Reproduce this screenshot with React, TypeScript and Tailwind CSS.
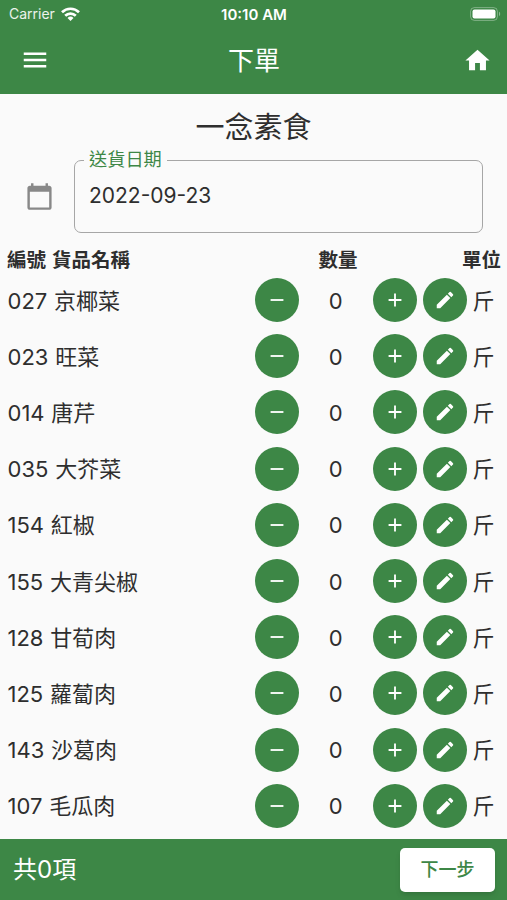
import { MdAdd, MdCalendarToday, MdEdit, MdHome, MdMenu, MdRemove } from "react-icons/md";

interface IProduct {
  code: string;
  name: string;
  unit: string;
}

const products: IProduct[] = [
  { code: "027", name: "京椰菜", unit: "斤" },
  { code: "023", name: "旺菜", unit: "斤" },
  { code: "014", name: "唐芹", unit: "斤" },
  { code: "035", name: "大芥菜", unit: "斤" },
  { code: "154", name: "紅椒", unit: "斤" },
  { code: "155", name: "大青尖椒", unit: "斤" },
  { code: "128", name: "甘荀肉", unit: "斤" },
  { code: "125", name: "蘿蔔肉", unit: "斤" },
  { code: "143", name: "沙葛肉", unit: "斤" },
  { code: "107", name: "毛瓜肉", unit: "斤" },
];

const StatusBar = () => (
  <div className="h-7 grid grid-cols-3 items-center pl-[9px] pr-[6px] text-[14px] leading-none">
    <span className="flex items-center gap-[6px] text-white/90">
      Carrier
      <svg width="19" height="14" viewBox="0 0 19 14" fill="none" stroke="white" strokeWidth="2.7">
        <path d="M1 5.2a12.2 12.2 0 0 1 17 0" />
        <path d="M4.2 8.7a7.6 7.6 0 0 1 10.6 0" />
        <path d="M9.5 14L6.5 11a4.3 4.3 0 0 1 6 0z" fill="white" stroke="none" />
      </svg>
    </span>
    <span className="pr-[2px] text-center text-[15px] font-semibold">10:10 AM</span>
    <svg className="justify-self-end" width="31" height="14" viewBox="0 0 31 14">
      <rect x="0.6" y="0.6" width="26.8" height="12.8" rx="3.8" fill="none" stroke="white" strokeOpacity="0.35" />
      <rect x="2.5" y="2.5" width="23" height="9" rx="2" fill="white" />
      <path d="M29 4.8v4.4c1.6-.6 1.6-3.8 0-4.4z" fill="white" fillOpacity="0.4" />
    </svg>
  </div>
);

const ProductRow = ({ product }: { product: IProduct }) => (
  <li className="h-[56.2px] flex items-center pl-[7.5px]">
    <p className="w-[247.5px] pt-[2px] whitespace-pre [word-spacing:0.6px]">
      {product.code} {product.name}
    </p>
    <button className="size-11 rounded-full bg-[#3d8746] text-white flex items-center justify-center">
      <MdRemove className="size-[22px]" />
    </button>
    <span className="w-[73.5px] pt-[2px] text-center">0</span>
    <button className="size-11 rounded-full bg-[#3d8746] text-white flex items-center justify-center">
      <MdAdd className="size-[22px]" />
    </button>
    <button className="ml-[6px] size-11 rounded-full bg-[#3d8746] text-white flex items-center justify-center">
      <MdEdit className="size-[22px]" />
    </button>
    <span className="ml-[6px] pt-[2px]">{product.unit}</span>
  </li>
);

const App = () => {
  return (
    <div className="h-[900px] w-[507px] flex flex-col overflow-hidden bg-[#fafafa] text-[#2e2e2e] font-['Inter','Noto_Sans_CJK_TC',sans-serif]">
      <header className="h-[94px] shrink-0 bg-[#3d8746] text-white">
        <StatusBar />
        <div className="h-[64px] flex items-center justify-between pl-[20px] pr-[15px]">
          <MdMenu className="size-[30px]" />
          <h1 className="pt-px pr-[5px] text-[26px] leading-none">下單</h1>
          <MdHome className="size-[29px]" />
        </div>
      </header>

      <main className="flex-1 min-h-0">
        <h2 className="h-[58px] pt-[13px] text-center text-[29px] leading-[42px]">一念素食</h2>

        <div className="flex items-center pl-[25px] pr-6">
          <MdCalendarToday className="mt-[7px] size-[29px] text-[#888888]" />
          <fieldset className="ml-5 h-[81px] flex-1 rounded-[7px] border border-[#a6a6a6] pl-[9px]">
            <legend className="px-[5px] h-[16px] text-[18.2px] leading-[14px] text-[#3d8746]">送貨日期</legend>
            <p className="pl-[5px] mt-[15px] text-[21px] leading-[26px]">2022-09-23</p>
          </fieldset>
        </div>

        <div className="h-[39px] flex items-center pl-[7px] pr-[6px] pt-[15px] text-[19.5px] leading-6 font-bold">
          <span className="w-[311.5px] [word-spacing:1.5px]">編號 貨品名稱</span>
          <span className="flex-1">數量</span>
          <span>單位</span>
        </div>

        <ul className="text-[22px]">
          {products.map((product) => (
            <ProductRow key={product.code} product={product} />
          ))}
        </ul>
      </main>

      <footer className="h-[61px] shrink-0 flex items-center justify-between bg-[#3d8746] pl-[13px] pr-3 text-white">
        <p className="pt-px text-[24px]">共0項</p>
        <button className="h-11 w-[95px] rounded-[5px] bg-white text-[18px] font-medium text-[#3d8746] shadow-md">
          下一步
        </button>
      </footer>
    </div>
  );
};

export default App;
